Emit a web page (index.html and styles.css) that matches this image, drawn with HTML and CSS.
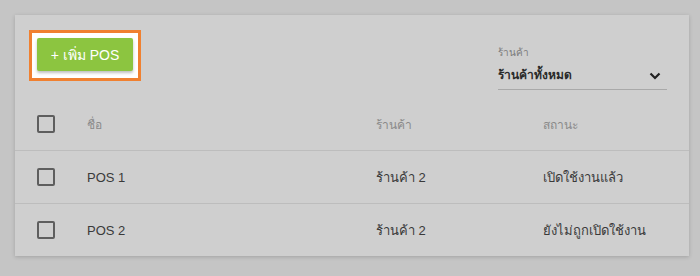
FILE: index.html
```html
<!DOCTYPE html>
<html lang="th">
<head>
<meta charset="utf-8">
<link rel="stylesheet" href="styles.css">
</head>
<body>
<div class="card">
  <div class="toolbar">
    <div class="btn-wrap">
      <span class="highlight"></span>
      <button class="btn-add">+ เพิ่ม POS</button>
    </div>
    <div class="select">
      <div class="select-label">ร้านค้า</div>
      <div class="select-field">
        <span class="select-value">ร้านค้าทั้งหมด</span>
        <svg class="chevron" width="12" height="8" viewBox="0 0 12 8"><path d="M1.5 1.5 L6 6 L10.5 1.5" fill="none" stroke="#222" stroke-width="2.2"/></svg>
      </div>
    </div>
  </div>
  <div class="table">
    <div class="row head">
      <div class="c-check"><span class="checkbox"></span></div>
      <div class="c-name">ชื่อ</div>
      <div class="c-store">ร้านค้า</div>
      <div class="c-status">สถานะ</div>
    </div>
    <div class="row">
      <div class="c-check"><span class="checkbox"></span></div>
      <div class="c-name">POS 1</div>
      <div class="c-store">ร้านค้า 2</div>
      <div class="c-status">เปิดใช้งานแล้ว</div>
    </div>
    <div class="row last">
      <div class="c-check"><span class="checkbox"></span></div>
      <div class="c-name">POS 2</div>
      <div class="c-store">ร้านค้า 2</div>
      <div class="c-status">ยังไม่ถูกเปิดใช้งาน</div>
    </div>
  </div>
</div>
</body>
</html>
```

FILE: styles.css
```css
html, body {
  margin: 0;
  padding: 0;
}
body {
  background: #c5c5c5;
  font-family: "Liberation Sans", Arial, "Noto Sans", sans-serif;
  width: 700px;
  height: 276px;
  padding: 15px 11px 0 15px;
  box-sizing: border-box;
}
.card {
  background: #cfcfcf;
  box-shadow: 0 1px 4px rgba(0,0,0,0.18);
  height: 241px;
}
.toolbar {
  display: flex;
  justify-content: space-between;
  align-items: flex-start;
  padding: 23px 22px 8px 22px;
  height: 52px;
}
.btn-wrap {
  position: relative;
}
.highlight {
  position: absolute;
  left: -8px;
  top: -8px;
  right: -8px;
  bottom: -10px;
  background: #ffffff;
  border: 3px solid #f08030;
  box-sizing: border-box;
}
.btn-add {
  position: relative;
  display: block;
  width: 96px;
  height: 33px;
  border: none;
  border-radius: 2px;
  background: #8cc540;
  color: #ffffff;
  font-family: "Liberation Sans", Arial, sans-serif;
  font-size: 14px;
  font-weight: normal;
  box-shadow: 0 2px 3px rgba(0,0,0,0.25);
  padding: 0;
}
.select {
  width: 169px;
  margin-top: 8px;
}
.select-label {
  font-size: 10px;
  color: #7a7a7a;
  line-height: 14px;
}
.select-field {
  display: flex;
  align-items: center;
  justify-content: space-between;
  height: 29px;
  border-bottom: 1px solid #a9a9a9;
  padding-right: 6px;
}
.select-value {
  font-size: 12px;
  font-weight: bold;
  color: #2a2a2a;
}
.chevron {
  margin-top: 3px;
}
.row {
  display: flex;
  align-items: center;
  height: 52px;
  border-bottom: 1px solid #bdbdbd;
  font-size: 13px;
  color: #3a3a3a;
}
.row.last {
  border-bottom: none;
}
.row.head {
  height: 52px;
  font-size: 12px;
  color: #8a8a8a;
}
.c-check {
  width: 72px;
  padding-left: 22px;
  box-sizing: border-box;
  display: flex;
  align-items: center;
}
.checkbox {
  width: 14px;
  height: 14px;
  border: 2px solid #5e5e5e;
  border-radius: 2px;
  display: block;
}
.c-name {
  width: 289px;
}
.c-store {
  width: 167px;
}
.c-status {
  flex: 1;
}
```
